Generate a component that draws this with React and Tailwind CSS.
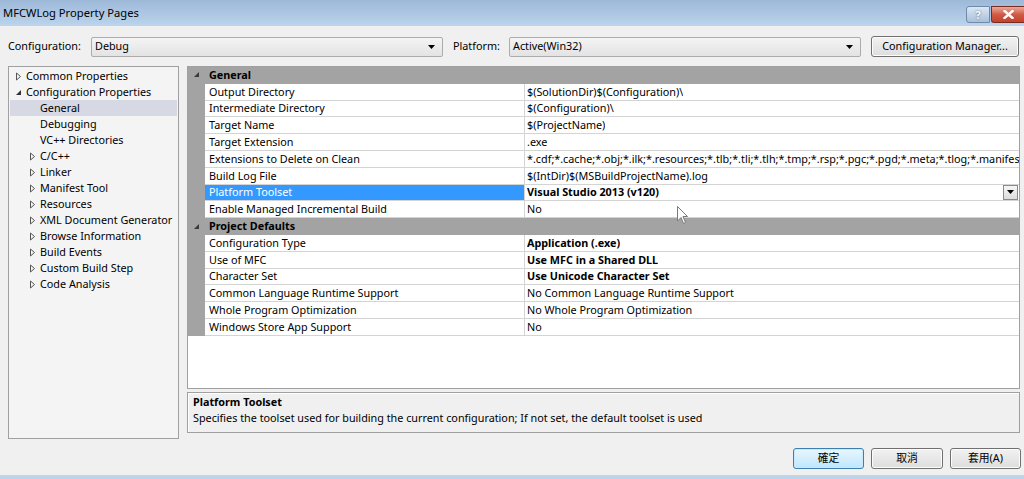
import React from "react";

const FONT = { fontFamily: '"Noto Sans", "Noto Sans CJK TC", sans-serif' };

function Collapsed() {
  return (
    <svg width="7" height="9" viewBox="0 0 7 9" className="shrink-0">
      <path d="M1.5 1 L5.5 4.5 L1.5 8 Z" fill="none" stroke="#555" strokeWidth="1" />
    </svg>
  );
}

function Expanded({ color = "#333" }) {
  return (
    <svg width="7" height="7" viewBox="0 0 7 7" className="shrink-0">
      <path d="M6 1 L6 6 L1 6 Z" fill={color} />
    </svg>
  );
}

function DownTri() {
  return (
    <svg width="7" height="4" viewBox="0 0 7 4">
      <path d="M0 0 L7 0 L3.5 4 Z" fill="#000" />
    </svg>
  );
}

function Combo({ value, className }) {
  return (
    <div
      className={
        "h-[20px] shrink-0 flex items-center justify-between pl-[3px] pr-[7px] border border-[#acacac] rounded-[2px] bg-gradient-to-b from-[#f4f4f4] to-[#e3e3e3] text-black " +
        className
      }
    >
      <span>{value}</span>
      <DownTri />
    </div>
  );
}

function Button({ children, className, primary }) {
  return (
    <div
      className={
        "h-[21px] shrink-0 flex items-center justify-center rounded-[3px] border text-black bg-gradient-to-b " +
        (primary
          ? "border-[#3c7fb1] from-[#eaf6fd] to-[#bee6fd] shadow-[inset_0_0_0_1px_#c9e9fc] "
          : "border-[#707070] from-[#f2f2f2] to-[#dddddd] shadow-[inset_0_0_0_1px_#fcfcfc] ") +
        className
      }
    >
      {children}
    </div>
  );
}

const tree = [
  { label: "Common Properties", level: 0, state: "collapsed" },
  { label: "Configuration Properties", level: 0, state: "expanded" },
  { label: "General", level: 1, selected: true },
  { label: "Debugging", level: 1 },
  { label: "VC++ Directories", level: 1 },
  { label: "C/C++", level: 1, state: "collapsed" },
  { label: "Linker", level: 1, state: "collapsed" },
  { label: "Manifest Tool", level: 1, state: "collapsed" },
  { label: "Resources", level: 1, state: "collapsed" },
  { label: "XML Document Generator", level: 1, state: "collapsed" },
  { label: "Browse Information", level: 1, state: "collapsed" },
  { label: "Build Events", level: 1, state: "collapsed" },
  { label: "Custom Build Step", level: 1, state: "collapsed" },
  { label: "Code Analysis", level: 1, state: "collapsed" },
];

const grid = [
  { cat: "General" },
  { name: "Output Directory", value: "$(SolutionDir)$(Configuration)\\" },
  { name: "Intermediate Directory", value: "$(Configuration)\\" },
  { name: "Target Name", value: "$(ProjectName)" },
  { name: "Target Extension", value: ".exe" },
  {
    name: "Extensions to Delete on Clean",
    value:
      "*.cdf;*.cache;*.obj;*.ilk;*.resources;*.tlb;*.tli;*.tlh;*.tmp;*.rsp;*.pgc;*.pgd;*.meta;*.tlog;*.manifest;*.res;",
  },
  { name: "Build Log File", value: "$(IntDir)$(MSBuildProjectName).log" },
  { name: "Platform Toolset", value: "Visual Studio 2013 (v120)", bold: true, selected: true },
  { name: "Enable Managed Incremental Build", value: "No" },
  { cat: "Project Defaults" },
  { name: "Configuration Type", value: "Application (.exe)", bold: true },
  { name: "Use of MFC", value: "Use MFC in a Shared DLL", bold: true },
  { name: "Character Set", value: "Use Unicode Character Set", bold: true },
  { name: "Common Language Runtime Support", value: "No Common Language Runtime Support" },
  { name: "Whole Program Optimization", value: "No Whole Program Optimization" },
  { name: "Windows Store App Support", value: "No" },
];

export default function App() {
  return (
    <div
      className="w-[1024px] h-[479px] bg-[#f0f0f0] flex flex-col relative overflow-hidden text-black text-[10.8px] whitespace-nowrap"
      style={FONT}
    >
      {/* Title bar */}
      <div className="h-[26px] shrink-0 flex items-start justify-between bg-gradient-to-b from-[#9db9d8] to-[#bcd4ec]">
        <div className="pl-[3px] pt-[5px] text-[11.2px] leading-[16px] text-black">MFCWLog Property Pages</div>
        <div className="flex pt-[6px] gap-[1px]">
          <div className="w-[24px] h-[17px] rounded-l-[3px] border border-[#6f8aa8] bg-gradient-to-b from-[#dbe7f3] to-[#a9c0da] flex items-center justify-center text-[11px] font-bold text-white leading-none [text-shadow:0_0_2px_#3a5677]">
            ?
          </div>
          <div className="w-[33px] h-[17px] rounded-bl-[3px] border border-[#7a2a22] border-r-0 bg-gradient-to-b from-[#e9a99a] via-[#cf5a45] to-[#c2422d] flex items-center justify-center">
            <svg width="11" height="9" viewBox="0 0 11 9">
              <path d="M1.5 1 L9.5 8 M9.5 1 L1.5 8" stroke="#fff" strokeWidth="2.4" strokeLinecap="square" />
            </svg>
          </div>
        </div>
      </div>

      {/* Toolbar */}
      <div className="flex items-center h-[21px] mt-[10px] pl-[8px] pr-[5px] shrink-0">
        <span className="w-[83px] shrink-0">Configuration:</span>
        <Combo value="Debug" className="w-[352px]" />
        <span className="ml-[10px] w-[56px] shrink-0">Platform:</span>
        <Combo value="Active(Win32)" className="w-[352px]" />
        <Button className="ml-[10px] w-[148px]">Configuration Manager...</Button>
      </div>

      {/* Main */}
      <div className="flex mt-[9px] pl-[8px] pr-[4px] gap-[8px] h-[373px] shrink-0">
        {/* Tree */}
        <div className="w-[171px] shrink-0 h-[373px] bg-[#f4f4f4] border border-[#a0a0a0] pt-[1px]">
          {tree.map((t) => (
            <div
              key={t.label}
              className={"h-[16px] flex items-center mx-[1px] " + (t.selected ? "bg-[#d6d9e3]" : "")}
            >
              <div className={"flex items-center " + (t.level === 0 ? "pl-[5px]" : "pl-[19px]")}>
                <div className="w-[10px] flex items-center">
                  {t.state === "collapsed" && <Collapsed />}
                  {t.state === "expanded" && <Expanded />}
                </div>
                <span className="leading-[16px] pl-[1px]">{t.label}</span>
              </div>
            </div>
          ))}
        </div>

        {/* Right column */}
        <div className="flex-1 min-w-0 flex flex-col gap-[3px]">
          <div className="h-[323px] bg-white border border-[#a0a0a0] flex flex-col">
            {grid.map((r, i) =>
              r.cat ? (
                <div key={i} className="h-[16.8px] flex items-center bg-[#a3a3a3] border-b border-[#a3a3a3]">
                  <div className="w-[17px] flex justify-center items-center">
                    <Expanded color="#3a3a3a" />
                  </div>
                  <span className="pl-[4px] font-bold leading-none">{r.cat}</span>
                </div>
              ) : (
                <div key={i} className="h-[16.8px] flex">
                  <div className="w-[17px] bg-[#a3a3a3] shrink-0" />
                  <div
                    className={
                      "w-[320px] shrink-0 flex items-center pl-[4px] border-b border-r border-[#d4d4d4] overflow-hidden " +
                      (r.selected ? "bg-[#3399ff] text-white" : "")
                    }
                  >
                    {r.name}
                  </div>
                  <div
                    className={
                      "flex-1 min-w-0 flex items-center justify-between pl-[2px] border-b border-[#d4d4d4] overflow-hidden " +
                      (r.bold ? "font-bold" : "")
                    }
                  >
                    <span className="overflow-hidden">{r.value}</span>
                    {r.selected && (
                      <div className="w-[15px] h-[15px] mr-[1px] shrink-0 border border-[#8a8a8a] bg-gradient-to-b from-[#f6f6f6] to-[#dcdcdc] flex items-center justify-center">
                        <DownTri />
                      </div>
                    )}
                  </div>
                </div>
              )
            )}
          </div>
          <div className="h-[41px] bg-[#f0f0f0] border border-[#a0a0a0] shadow-[inset_1px_1px_0_#fff] pl-[5px] pt-[1px] leading-[16px]">
            <div className="font-bold">Platform Toolset</div>
            <div>Specifies the toolset used for building the current configuration; If not set, the default toolset is used</div>
          </div>
        </div>
      </div>

      {/* Buttons */}
      <div className="flex justify-end gap-[7px] pr-[3px] mt-[9px] shrink-0">
        <Button primary className="w-[71px]">確定</Button>
        <Button className="w-[72px]">取消</Button>
        <Button className="w-[71px]">套用(A)</Button>
      </div>

      <div className="mt-auto h-[4px] bg-[#bcd4ec] shrink-0" />

      {/* Mouse cursor */}
      <svg className="absolute left-[677px] top-[206px]" width="12" height="19" viewBox="0 0 12 19">
        <path d="M0.5 0.5 L0.5 15 L4 11.5 L6.5 17.5 L8.5 16.5 L6 10.5 L10.5 10.5 Z" fill="#fff" stroke="#7a7a7a" strokeWidth="1" />
      </svg>
    </div>
  );
}
